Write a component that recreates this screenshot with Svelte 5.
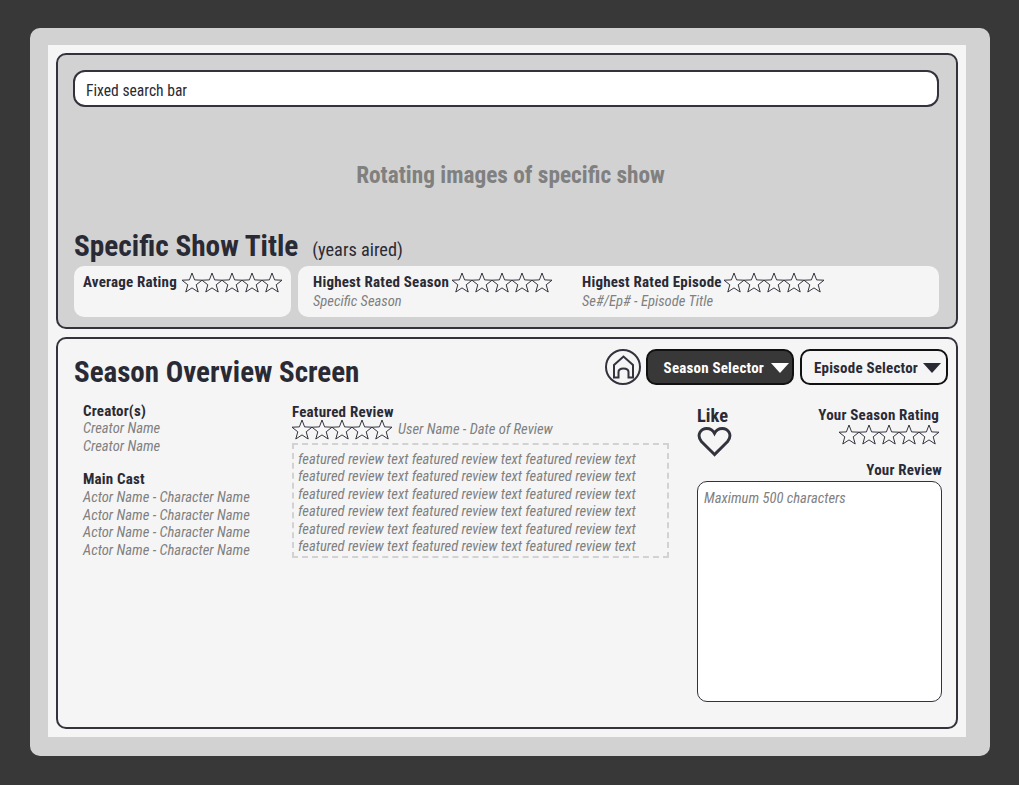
<script>
    const creators = ["Creator Name", "Creator Name"];
    const cast = [
        "Actor Name - Character Name",
        "Actor Name - Character Name",
        "Actor Name - Character Name",
        "Actor Name - Character Name",
    ];
    const reviewLine = "featured review text featured review text featured review text";
    const reviewLines = [1, 2, 3, 4, 5, 6];
    const stars = [1, 2, 3, 4, 5];
</script>

{#snippet rating()}
    <span class="stars">
        {#each stars as s}
            <svg class="star" viewBox="0 0 22 21" width="22" height="21">
                <path d="M11 1 L13.6 7.9 L21 8.2 L15.2 12.8 L17.2 20 L11 15.9 L4.8 20 L6.8 12.8 L1 8.2 L8.4 7.9 Z" />
            </svg>
        {/each}
    </span>
{/snippet}

{#snippet caret()}
    <svg class="caret" viewBox="0 0 18 10" width="18" height="10"><path d="M0 0 H18 L9 10 Z" /></svg>
{/snippet}

<div class="frame">
    <div class="page">
        <section class="panel top">
            <div class="search">Fixed search bar</div>
            <div class="hero">Rotating images of specific show</div>
            <div class="title-row">
                <h1>Specific Show Title</h1>
                <span class="years">(years aired)</span>
            </div>
            <div class="cards">
                <div class="card first">
                    <div class="stat">
                        <div class="head"><b>Average Rating</b>{@render rating()}</div>
                    </div>
                </div>
                <div class="card second">
                    <div class="stat season">
                        <div class="head"><b>Highest Rated Season</b>{@render rating()}</div>
                        <i>Specific Season</i>
                    </div>
                    <div class="stat episode">
                        <div class="head"><b>Highest Rated Episode</b>{@render rating()}</div>
                        <i>Se#/Ep# - Episode Title</i>
                    </div>
                </div>
            </div>
        </section>

        <section class="panel bottom">
            <div class="bar">
                <h1>Season Overview Screen</h1>
                <div class="controls">
                    <svg class="home" viewBox="0 0 36 36" width="36" height="36">
                        <circle cx="18" cy="18" r="17" />
                        <path d="M9 28.5 V16 L18.5 7.5 L28 16 V28.5 H23.5 V23 Q23.5 19.5 18.5 19.5 Q13.5 19.5 13.5 23 V28.5 Z" />
                    </svg>
                    <div class="select dark">Season Selector {@render caret()}</div>
                    <div class="select light">Episode Selector {@render caret()}</div>
                </div>
            </div>

            <div class="columns">
                <div class="people">
                    <b>Creator(s)</b>
                    {#each creators as c}<i>{c}</i>{/each}
                    <b class="cast">Main Cast</b>
                    {#each cast as c}<i>{c}</i>{/each}
                </div>

                <div class="featured">
                    <b>Featured Review</b>
                    <div class="byline">{@render rating()}<i>User Name - Date of Review</i></div>
                    <div class="quote">
                        {#each reviewLines as n}<i>{reviewLine}</i>{/each}
                    </div>
                </div>

                <div class="mine">
                    <div class="mine-head">
                        <div class="like">
                            <span>Like</span>
                            <svg viewBox="0 0 36 32" width="35" height="31">
                                <path class="heart" d="M18 29.5 L4.5 16 C-1 9 4 2.5 10 2.5 C13.5 2.5 16.5 4.5 18 7.5 C19.5 4.5 22.5 2.5 26 2.5 C32 2.5 37 9 31.5 16 Z" />
                            </svg>
                        </div>
                        <div class="own">
                            <b>Your Season Rating</b>
                            {@render rating()}
                        </div>
                    </div>
                    <b class="your">Your Review</b>
                    <div class="textbox"><i>Maximum 500 characters</i></div>
                </div>
            </div>
        </section>
    </div>
</div>

<style>
    :global(body) {
        margin: 0;
        background: #383838;
    }

    .frame {
        width: 960px;
        height: 728px;
        margin: 28px 0 0 30px;
        padding: 17px 24px 19px 18px;
        box-sizing: border-box;
        background: #d2d2d2;
        border-radius: 10px;
        font-family: "Roboto Condensed", Roboto, sans-serif;
        font-stretch: 75%;
        color: #2a2a35;
    }

    .page {
        height: 100%;
        padding: 8px;
        box-sizing: border-box;
        background: #f5f5f5;
        display: flex;
        flex-direction: column;
        gap: 8px;
    }

    .panel {
        border: 2px solid #33333e;
        border-radius: 10px;
        box-sizing: border-box;
    }

    .top {
        height: 276px;
        background: #d2d2d2;
        padding: 15px 17px 10px 16px;
    }

    .bottom {
        height: 392px;
        padding: 0 8px 0 16px;
    }

    b, i {
        display: block;
    }

    b {
        font-weight: 700;
        font-size: 15px;
        letter-spacing: 0.2px;
        line-height: 17px;
        white-space: nowrap;
    }

    i {
        color: #808080;
        font-size: 14.6px;
        line-height: 17.5px;
        white-space: nowrap;
    }

    h1 {
        margin: 0;
        font-size: 29px;
        line-height: 36px;
        font-weight: 700;
        white-space: nowrap;
    }

    .search {
        height: 37px;
        margin-left: -1px;
        box-sizing: border-box;
        background: #fff;
        border: 2px solid #33333e;
        border-radius: 12px;
        padding: 1px 0 0 11px;
        font-size: 15.6px;
        line-height: 36px;
    }

    .hero {
        margin-top: 51px;
        padding-left: 8px;
        text-align: center;
        font-size: 23.3px;
        font-weight: 700;
        line-height: 34px;
        color: #808080;
    }

    .title-row {
        margin-top: 36px;
        display: flex;
        align-items: baseline;
        gap: 14px;
    }

    .title-row h1 {
        font-size: 29.3px;
    }

    .years {
        font-size: 18.3px;
    }

    .cards {
        display: flex;
        gap: 7px;
        margin-top: 2px;
    }

    .card {
        height: 51px;
        background: #f5f5f5;
        border-radius: 10px;
        padding: 6px 9px;
        box-sizing: border-box;
        display: flex;
    }

    .first {
        width: 217px;
    }

    .second {
        flex: 1;
        padding-left: 15px;
    }

    .season {
        width: 269px;
    }

    .head {
        display: flex;
        align-items: center;
        gap: 4px;
        height: 21px;
    }

    .season .head {
        gap: 2px;
    }

    .episode .head {
        gap: 1px;
    }

    .stars {
        display: inline-flex;
    }

    .star {
        margin-right: -2px;
        flex: none;
    }

    .star path {
        fill: #fff;
        fill-opacity: 0.25;
        stroke: #33333e;
        stroke-width: 1;
    }

    .bar {
        display: flex;
        justify-content: space-between;
        align-items: flex-start;
        padding-top: 10px;
    }

    .bar h1 {
        margin-top: 5px;
    }

    .controls {
        display: flex;
        align-items: center;
        gap: 5px;
    }

    .home circle, .home path {
        fill: none;
        stroke: #33333e;
        stroke-width: 2;
    }

    .select {
        width: 148px;
        height: 36px;
        box-sizing: border-box;
        border-radius: 10px;
        border: 2px solid #111;
        padding-top: 1px;
        font-size: 15px;
        letter-spacing: 0.2px;
        font-weight: 700;
        display: flex;
        align-items: center;
        justify-content: flex-end;
        white-space: nowrap;
    }

    .dark {
        background: #383838;
        color: #fff;
        gap: 7px;
        padding-right: 3px;
    }

    .light {
        background: #f5f5f5;
        gap: 5px;
        padding-right: 5px;
        margin-left: 1px;
    }

    .caret path {
        fill: #fff;
    }

    .light .caret path {
        fill: #2a2a35;
    }

    .columns {
        display: flex;
        margin-top: 5px;
    }

    .people {
        width: 218px;
        padding: 8px 0 0 9px;
        box-sizing: border-box;
    }

    .cast {
        margin: 16px 0 1px;
    }

    .featured {
        width: 377px;
        padding-top: 9px;
    }

    .byline {
        display: flex;
        align-items: center;
        gap: 7px;
        margin: -2px 0 0 -1px;
    }

    .quote {
        margin-top: 3px;
        height: 115px;
        padding: 6px 4px;
        box-sizing: border-box;
        border: 2px dashed #d2d2d2;
    }

    .quote i {
        line-height: 17.4px;
    }

    .mine {
        width: 245px;
        margin-left: 28px;
        padding-top: 11px;
    }

    .mine-head {
        display: flex;
        justify-content: space-between;
        padding-right: 3px;
    }

    .like {
        font-size: 18.5px;
        font-weight: 700;
        line-height: 20px;
        display: flex;
        flex-direction: column;
    }

    .heart {
        fill: none;
        stroke: #33333e;
        stroke-width: 3;
    }

    .own {
        display: flex;
        flex-direction: column;
        align-items: flex-end;
        padding-top: 1px;
    }

    .own .stars {
        margin-right: 1px;
    }

    .your {
        text-align: right;
        margin-top: 5px;
    }

    .textbox {
        height: 221px;
        margin-top: 2px;
        background: #fff;
        border: 1px solid #33333e;
        border-radius: 10px;
        padding: 8px 6px;
        box-sizing: border-box;
    }
</style>
